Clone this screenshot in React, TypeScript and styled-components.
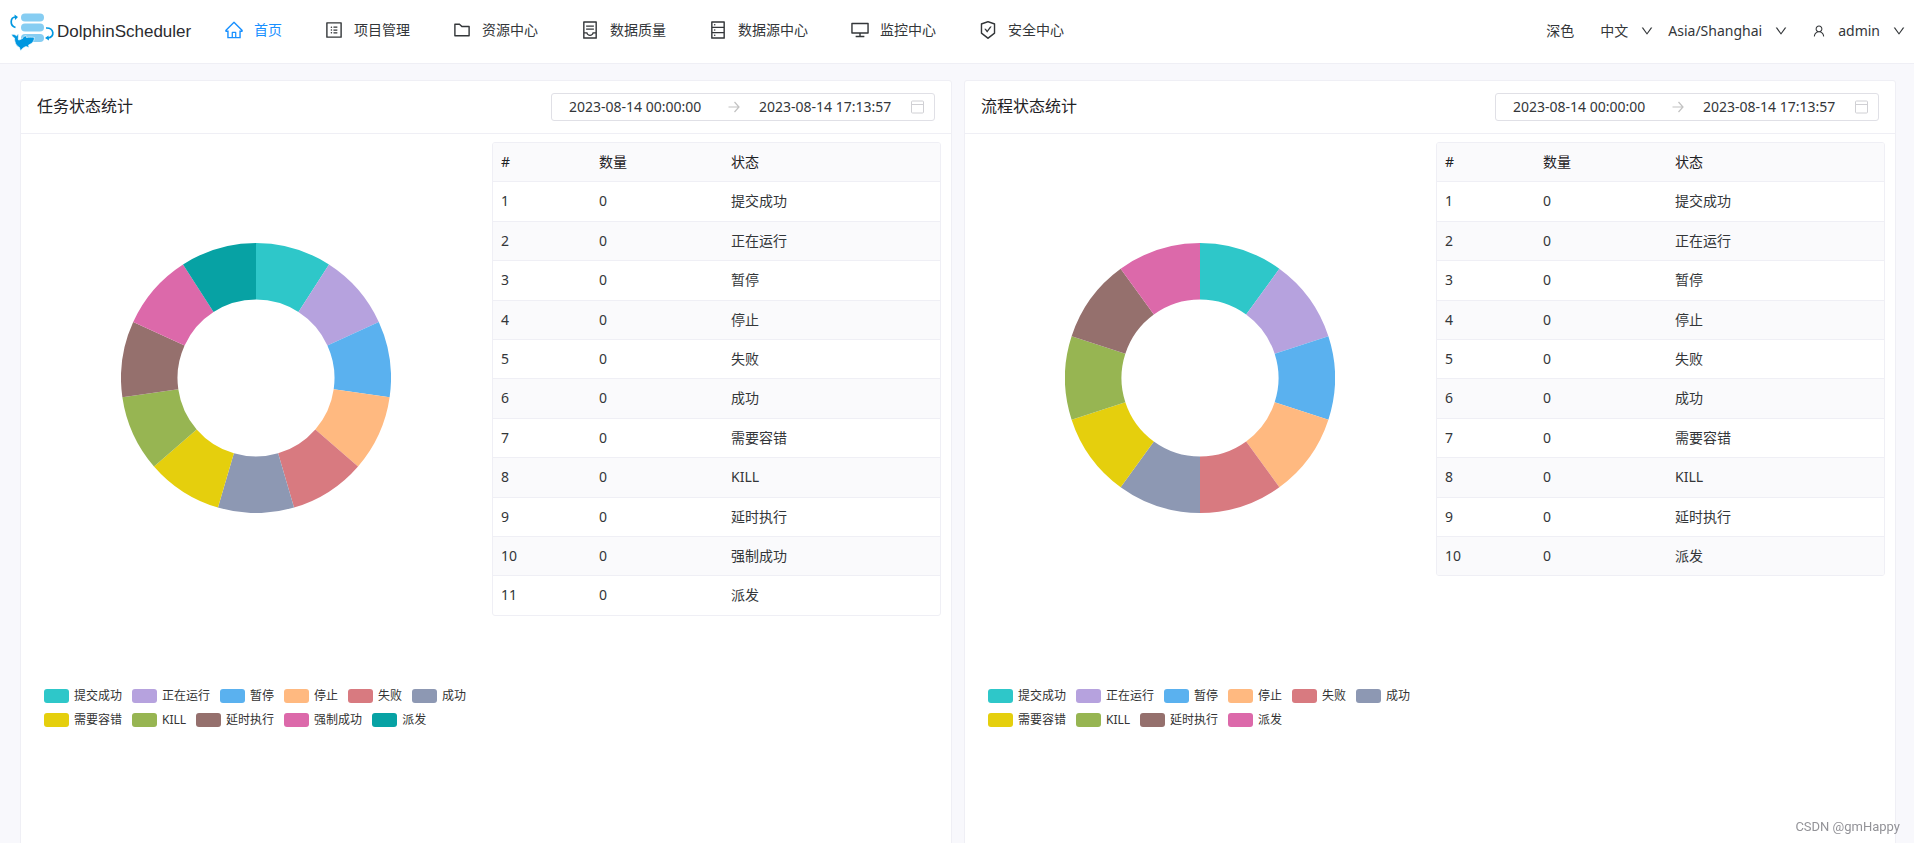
import React from "react";
import styled, { createGlobalStyle } from "styled-components";
import {
  AiOutlineHome,
  AiOutlineProfile,
  AiOutlineFolder,
  AiOutlineContainer,
  AiOutlineDatabase,
  AiOutlineDesktop,
  AiOutlineSafetyCertificate,
  AiOutlineUser,
  AiOutlineDown,
} from "react-icons/ai";

const GlobalStyle = createGlobalStyle`
  *, *::before, *::after { box-sizing: border-box; }
  body {
    margin: 0;
    color: #333639;
    background: #f8f8fc;
    font-family: "Noto Sans", "Noto Sans CJK SC", sans-serif;
    font-size: 14px;
    line-height: 1.6;
  }
`;

const Page = styled.div`
  display: flex;
  flex-direction: column;
  height: 100vh;
`;

const Header = styled.header`
  display: flex;
  align-items: center;
  justify-content: space-between;
  flex: none;
  height: 64px;
  padding: 0 8px 0 10px;
  background: #fff;
  border-bottom: 1px solid #efeff5;
`;

const HeaderSide = styled.div`
  display: flex;
  align-items: center;
`;

const Brand = styled.a`
  display: flex;
  align-items: center;
  gap: 2px;
  width: 214px;
  color: #2b2b2f;
  font-family: "Liberation Sans", Arial, sans-serif;
  font-size: 17px;
  text-decoration: none;
`;

const Nav = styled.nav`
  display: flex;
  align-items: center;
  gap: 42px;
  padding-bottom: 2px;
`;

const NavLink = styled.a<{ $active?: boolean }>`
  display: flex;
  align-items: center;
  gap: 10px;
  color: ${(p) => (p.$active ? "#1890ff" : "#333639")};
  text-decoration: none;
  white-space: nowrap;

  svg {
    width: 20px;
    height: 20px;
  }
`;

const Tools = styled.div`
  display: flex;
  align-items: center;
`;

const ToolButton = styled.button<{ $gap: number }>`
  display: flex;
  align-items: center;
  gap: 12px;
  margin: 0 0 0 ${(p) => p.$gap}px;
  padding: 0;
  border: 0;
  background: none;
  color: inherit;
  font: inherit;
  cursor: pointer;

  svg {
    width: 14px;
    height: 14px;
  }
`;

const Main = styled.main`
  display: grid;
  grid-template-columns: 1fr 1fr;
  gap: 12px;
  flex: 1;
  min-height: 0;
  padding: 16px 18px 16px 20px;
  overflow: auto;
  scrollbar-width: none;
`;

const Card = styled.section`
  min-width: 0;
  min-height: 800px;
  background: #fff;
  border: 1px solid #efeff5;
  border-radius: 3px;
`;

const CardHeader = styled.div`
  display: flex;
  align-items: center;
  justify-content: space-between;
  padding: 12px 16px;
  border-bottom: 1px solid #efeff5;
`;

const CardTitle = styled.h2`
  margin: 0;
  color: #1f2225;
  font-size: 16px;
  font-weight: 400;
`;

const DateRange = styled.div`
  display: flex;
  align-items: center;
  gap: 18px;
  height: 28px;
  padding: 0 9px 0 17px;
  border: 1px solid #e0e0e6;
  border-radius: 3px;
`;

const DateField = styled.span`
  display: flex;
  align-items: center;
  gap: 12px;
`;

const DateInput = styled.input`
  width: 140px;
  padding: 0;
  border: 0;
  outline: 0;
  background: none;
  color: inherit;
  font: inherit;
`;

const CardBody = styled.div`
  display: grid;
  grid-template-columns: 469fr 449fr;
  gap: 2px;
  align-items: start;
  padding: 8px 10px 0 0;
`;

const ChartPanel = styled.div`
  display: flex;
  flex-direction: column;
  align-items: center;
  gap: 173px;
  padding: 101px 23px 0;
`;

const Legend = styled.ul`
  display: flex;
  flex-wrap: wrap;
  gap: 4px 10px;
  width: 100%;
  margin: 0;
  padding: 0;
  list-style: none;
`;

const LegendItem = styled.li`
  display: flex;
  align-items: center;
  gap: 5px;
  color: #333;
  font-size: 12px;
  line-height: 20px;
  white-space: nowrap;
`;

const Swatch = styled.span<{ $color: string }>`
  width: 25px;
  height: 14px;
  border-radius: 3px;
  background: ${(p) => p.$color};
`;

const Table = styled.table`
  width: 100%;
  table-layout: fixed;
  border: 1px solid #efeff5;
  border-radius: 3px;
  border-collapse: separate;
  border-spacing: 0;
  overflow: hidden;

  th, td {
    padding: 8px;
    text-align: left;
    font-weight: 400;
    border-bottom: 1px solid #efeff5;
  }
  th {
    color: #1f2225;
    background: #fafafc;
  }
  th:nth-child(1) { width: 98px; }
  th:nth-child(2) { width: 132px; }
  tbody tr:nth-child(even) { background: #fafafc; }
  tbody tr:last-child td { border-bottom: 0; }
`;

const Watermark = styled.div`
  position: fixed;
  right: 14px;
  bottom: 6px;
  color: #939398;
  font-family: Roboto, sans-serif;
  font-size: 13px;
  line-height: 20px;
`;

const NAV = [
  { label: "首页", Icon: AiOutlineHome },
  { label: "项目管理", Icon: AiOutlineProfile },
  { label: "资源中心", Icon: AiOutlineFolder },
  { label: "数据质量", Icon: AiOutlineContainer },
  { label: "数据源中心", Icon: AiOutlineDatabase },
  { label: "监控中心", Icon: AiOutlineDesktop },
  { label: "安全中心", Icon: AiOutlineSafetyCertificate },
];

const COLORS = [
  "#2ec7c9", "#b6a2de", "#5ab1ef", "#ffb980", "#d87a80", "#8d98b3",
  "#e5cf0d", "#97b552", "#95706d", "#dc69aa", "#07a2a4",
];

const TASK_STATES = [
  "提交成功", "正在运行", "暂停", "停止", "失败", "成功",
  "需要容错", "KILL", "延时执行", "强制成功", "派发",
];
const PROCESS_STATES = TASK_STATES.filter((s) => s !== "强制成功");

function Logo() {
  return (
    <svg width="45" height="40" viewBox="0 0 45 40" aria-hidden="true">
      <g fill="#86cdf2">
        <rect x="11" y="1.500" width="23" height="8" rx="4" />
        <rect x="11" y="11.500" width="23" height="8" rx="4" />
        <rect x="11" y="22" width="23" height="8" rx="4" />
      </g>
      <g fill="none" stroke="#0097e0" strokeWidth="1.7">
        <path d="M5.500 15.500C-0.500 13.500 0 5.500 5.500 5" />
        <path d="M36 16C44.500 15.500 45 25.500 38 26" />
      </g>
      <path d="M4.500 2.500L8 5L5 8ZM38.500 23.500L35 26L39 28.500Z" fill="#0097e0" />
      <path
        d="M1.500 22.500C4 22 5.500 23 6.500 24C7.500 23 8 22 8.500 22.500C8.500 25 8 26.500 8.500 28C10 28 11 27 12.500 26.500C13 25 14.500 24 16 23.500C16 24.500 16 25 16.500 25.500C19 25 22 25 24.500 25.500L24 28C23 31 20.500 32 18.500 33L19 35.500L16 34.500C13.500 35.500 12 36.500 10.500 39L9.500 35.500C6 34 4.500 30 4.500 26C3 25 2 24 1.500 22.500Z"
        fill="#0097e0"
        stroke="#fff"
        strokeWidth="0.6"
      />
    </svg>
  );
}

function ArrowIcon() {
  return (
    <svg width="14" height="14" viewBox="0 0 14 14" fill="none" stroke="#c2c2c2" strokeWidth="1.2" aria-hidden="true">
      <path d="M1.500 7H12M7.500 2L12 7L7.500 12" />
    </svg>
  );
}

function CalendarIcon() {
  return (
    <svg width="14" height="14" viewBox="0 0 14 14" fill="none" stroke="#d0d0d4" aria-hidden="true">
      <rect x="0.500" y="1" width="12" height="12" rx="1" />
      <path d="M1 4.500H12" />
    </svg>
  );
}

const CENTER = 135;
const INNER = 78.5;

function point(radius: number, turn: number) {
  const angle = turn * Math.PI * 2;
  return `${CENTER + radius * Math.sin(angle)} ${CENTER - radius * Math.cos(angle)}`;
}

function Ring({ states, title }: { states: string[]; title: string }) {
  return (
    <svg width="270" height="270" viewBox="0 0 270 270" role="img" aria-label={title}>
      {states.map((state, i) => {
        const from = i / states.length;
        const to = (i + 1) / states.length;
        return (
          <path
            key={state}
            fill={COLORS[i]}
            d={`M${point(CENTER, from)}A${CENTER} ${CENTER} 0 0 1 ${point(CENTER, to)}L${point(INNER, to)}A${INNER} ${INNER} 0 0 0 ${point(INNER, from)}Z`}
          />
        );
      })}
    </svg>
  );
}

function StatCard({ title, states }: { title: string; states: string[] }) {
  return (
    <Card>
      <CardHeader>
        <CardTitle>{title}</CardTitle>
        <DateRange>
          <DateInput aria-label="开始时间" defaultValue="2023-08-14 00:00:00" />
          <ArrowIcon />
          <DateField>
            <DateInput aria-label="结束时间" defaultValue="2023-08-14 17:13:57" />
            <CalendarIcon />
          </DateField>
        </DateRange>
      </CardHeader>
      <CardBody>
        <ChartPanel>
          <Ring states={states} title={title} />
          <Legend>
            {states.map((state, i) => (
              <LegendItem key={state}>
                <Swatch $color={COLORS[i]} />
                {state}
              </LegendItem>
            ))}
          </Legend>
        </ChartPanel>
        <Table>
          <thead>
            <tr>
              <th>#</th>
              <th>数量</th>
              <th>状态</th>
            </tr>
          </thead>
          <tbody>
            {states.map((state, i) => (
              <tr key={state}>
                <td>{i + 1}</td>
                <td>0</td>
                <td>{state}</td>
              </tr>
            ))}
          </tbody>
        </Table>
      </CardBody>
    </Card>
  );
}

export default function App() {
  return (
    <Page>
      <GlobalStyle />
      <Header>
        <HeaderSide>
          <Brand href="#">
            <Logo />
            DolphinScheduler
          </Brand>
          <Nav>
            {NAV.map(({ label, Icon }, i) => (
              <NavLink key={label} href="#" $active={i === 0}>
                <Icon />
                {label}
              </NavLink>
            ))}
          </Nav>
        </HeaderSide>
        <Tools>
          <ToolButton $gap={0}>深色</ToolButton>
          <ToolButton $gap={26}>
            中文
            <AiOutlineDown />
          </ToolButton>
          <ToolButton $gap={14}>
            Asia/Shanghai
            <AiOutlineDown />
          </ToolButton>
          <ToolButton $gap={24}>
            <AiOutlineUser />
            admin
            <AiOutlineDown />
          </ToolButton>
        </Tools>
      </Header>
      <Main>
        <StatCard title="任务状态统计" states={TASK_STATES} />
        <StatCard title="流程状态统计" states={PROCESS_STATES} />
      </Main>
      <Watermark>CSDN @gmHappy</Watermark>
    </Page>
  );
}
